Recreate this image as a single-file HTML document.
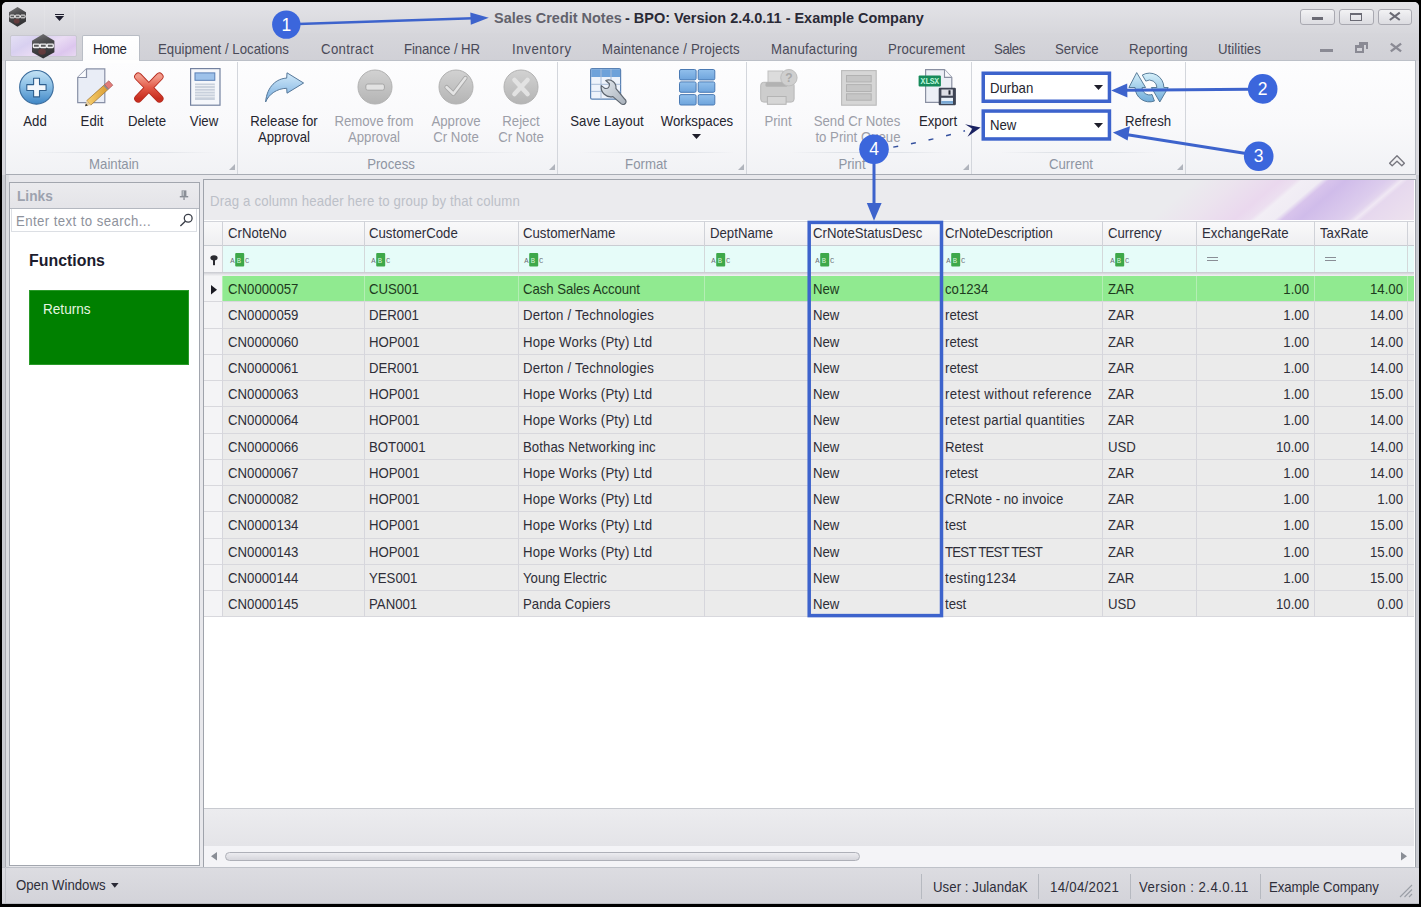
<!DOCTYPE html>
<html><head><meta charset="utf-8">
<style>
*{box-sizing:border-box;margin:0;padding:0}
html,body{width:1421px;height:907px;overflow:hidden;background:#000}
body{position:relative;font-family:"Liberation Sans",sans-serif;font-size:13.2px;color:#2b2b38}
.a{position:absolute}
svg.a{overflow:visible}
.t{position:absolute;white-space:pre;line-height:1}
</style></head><body>
<div class="a" style="left:2.00px;top:2.00px;width:1417.00px;height:902.00px;background:#d9d9de;border-radius:5px 5px 0 0"></div>
<div class="a" style="left:2.00px;top:2.00px;width:1417.00px;height:31.00px;background:linear-gradient(#e3e3e7,#d7d7dc);border-radius:5px 5px 0 0"></div>
<div class="a" style="left:2.00px;top:33.00px;width:1417.00px;height:28.00px;background:linear-gradient(#d6d6db,#d0d0d6)"></div>
<div class="a" style="left:44.00px;top:4.00px;width:1.00px;height:27.00px;background:rgba(255,255,255,0.12)"></div>
<div class="a" style="left:74.00px;top:4.00px;width:1.00px;height:27.00px;background:rgba(255,255,255,0.12)"></div>
<svg class="a" style="left:9.00px;top:7.30px" width="17" height="19.7" viewBox="0 0 17 19.7"><defs><linearGradient id="hg9" x1="0" y1="0" x2="0.3" y2="1"><stop offset="0" stop-color="#7a7a7c"/><stop offset="0.45" stop-color="#4a4a4c"/><stop offset="1" stop-color="#323234"/></linearGradient></defs><polygon points="8.5,0 17,5.319 17,14.578 8.5,19.7 0,14.578 0,5.319" fill="url(#hg9)"/><rect x="1.02" y="8.077" width="4.59" height="2.758" rx="0.8" fill="#5a5a5c" stroke="#f0f0f0" stroke-width="1"/><rect x="6.29" y="8.077" width="4.59" height="2.758" rx="0.8" fill="#5a5a5c" stroke="#f0f0f0" stroke-width="1"/><rect x="11.56" y="8.077" width="4.59" height="2.758" rx="0.8" fill="#5a5a5c" stroke="#f0f0f0" stroke-width="1"/><ellipse cx="7.65" cy="14.184" rx="2.89" ry="2.364" fill="#8c3c3c" opacity="0.5"/></svg>
<div class="a" style="left:54.80px;top:13.50px;width:9.10px;height:1.50px;background:#1e1e2e"></div>
<svg class="a" style="left:54.80px;top:15.80px" width="9.1" height="5" viewBox="0 0 9.1 5"><polygon points="0,0 9.1,0 4.55,5" fill="#1e1e2e"/></svg>
<div class="t" style="left:493.60px;top:10.42px;font-size:15.04px;color:#62626c;font-weight:bold;transform:scaleX(0.9615);transform-origin:0 0;">Sales Credit Notes</div>
<div class="t" style="left:625.38px;top:10.42px;font-size:15.04px;color:#2a2a36;font-weight:bold;transform:scaleX(0.9615);transform-origin:0 0;">- BPO: Version 2.4.0.11 - Example Company</div>
<div class="a" style="left:1300.00px;top:8.60px;width:35.00px;height:16.90px;background:linear-gradient(#f2f2f4,#dcdce1);border:1px solid #a9a9b1;border-radius:3px"></div>

<div class="a" style="left:1311.50px;top:17.30px;width:11.50px;height:2.50px;background:#6a6a74"></div>
<div class="a" style="left:1339.00px;top:8.60px;width:35.00px;height:16.90px;background:linear-gradient(#f2f2f4,#dcdce1);border:1px solid #a9a9b1;border-radius:3px"></div>

<div class="a" style="left:1349.60px;top:13.20px;width:12.70px;height:7.60px;border:1.8px solid #6a6a74;border-top-width:2.6px"></div>
<div class="a" style="left:1377.50px;top:8.60px;width:34.80px;height:16.90px;background:linear-gradient(#f2f2f4,#dcdce1);border:1px solid #a9a9b1;border-radius:3px"></div>

<svg class="a" style="left:1389.40px;top:12.20px" width="11.6" height="8.6" viewBox="0 0 11.6 8.6"><path d="M0.8,0.6 L10.8,8 M10.8,0.6 L0.8,8" stroke="#6a6a74" stroke-width="2"/></svg>
<div class="a" style="left:9.60px;top:34.70px;width:67.90px;height:22.80px;background:linear-gradient(150deg,#e4e0f4 0%,#d8d0f0 30%,#eadcf4 55%,#dcc6ee 80%,#e8d8f2 100%);border:1px solid #c8c8d0;border-radius:2px"></div>
<svg class="a" style="left:32.40px;top:34.00px" width="22.4" height="24.6" viewBox="0 0 22.4 24.6"><defs><linearGradient id="hg32" x1="0" y1="0" x2="0.3" y2="1"><stop offset="0" stop-color="#7a7a7c"/><stop offset="0.45" stop-color="#4a4a4c"/><stop offset="1" stop-color="#323234"/></linearGradient></defs><polygon points="11.2,0 22.4,6.642 22.4,18.204 11.2,24.6 0,18.204 0,6.642" fill="url(#hg32)"/><rect x="1.344" y="10.086" width="6.048" height="3.444" rx="0.8" fill="#5a5a5c" stroke="#f0f0f0" stroke-width="1.31765"/><rect x="8.288" y="10.086" width="6.048" height="3.444" rx="0.8" fill="#5a5a5c" stroke="#f0f0f0" stroke-width="1.31765"/><rect x="15.232" y="10.086" width="6.048" height="3.444" rx="0.8" fill="#5a5a5c" stroke="#f0f0f0" stroke-width="1.31765"/><ellipse cx="10.08" cy="17.712" rx="3.808" ry="2.952" fill="#8c3c3c" opacity="0.5"/></svg>
<div class="a" style="left:81.80px;top:34.60px;width:58.40px;height:27.40px;background:linear-gradient(#ffffff,#fbfbfc);border:1px solid #b9bdc5;border-bottom:none;border-radius:2px 2px 0 0"></div>
<div class="t" style="left:93.10px;top:41.84px;font-size:14.19px;color:#23232f;transform:scaleX(0.9302);transform-origin:0 0;letter-spacing:-0.513px;">Home</div>
<div class="t" style="left:158.10px;top:41.84px;font-size:14.19px;color:#4a4a58;transform:scaleX(0.9302);transform-origin:0 0;letter-spacing:0.020px;">Equipment / Locations</div>
<div class="t" style="left:320.70px;top:41.84px;font-size:14.19px;color:#4a4a58;transform:scaleX(0.9302);transform-origin:0 0;letter-spacing:0.378px;">Contract</div>
<div class="t" style="left:403.90px;top:41.84px;font-size:14.19px;color:#4a4a58;transform:scaleX(0.9302);transform-origin:0 0;letter-spacing:-0.092px;">Finance / HR</div>
<div class="t" style="left:511.70px;top:41.84px;font-size:14.19px;color:#4a4a58;transform:scaleX(0.9302);transform-origin:0 0;letter-spacing:0.646px;">Inventory</div>
<div class="t" style="left:602.40px;top:41.84px;font-size:14.19px;color:#4a4a58;transform:scaleX(0.9302);transform-origin:0 0;letter-spacing:0.178px;">Maintenance / Projects</div>
<div class="t" style="left:771.30px;top:41.84px;font-size:14.19px;color:#4a4a58;transform:scaleX(0.9302);transform-origin:0 0;letter-spacing:0.253px;">Manufacturing</div>
<div class="t" style="left:887.50px;top:41.84px;font-size:14.19px;color:#4a4a58;transform:scaleX(0.9302);transform-origin:0 0;letter-spacing:0.151px;">Procurement</div>
<div class="t" style="left:994.20px;top:41.84px;font-size:14.19px;color:#4a4a58;transform:scaleX(0.9302);transform-origin:0 0;letter-spacing:-0.434px;">Sales</div>
<div class="t" style="left:1055.00px;top:41.84px;font-size:14.19px;color:#4a4a58;transform:scaleX(0.9302);transform-origin:0 0;letter-spacing:-0.064px;">Service</div>
<div class="t" style="left:1128.90px;top:41.84px;font-size:14.19px;color:#4a4a58;transform:scaleX(0.9302);transform-origin:0 0;letter-spacing:0.176px;">Reporting</div>
<div class="t" style="left:1217.50px;top:41.84px;font-size:14.19px;color:#4a4a58;transform:scaleX(0.9302);transform-origin:0 0;letter-spacing:0.043px;">Utilities</div>
<div class="a" style="left:1320.20px;top:48.60px;width:12.50px;height:3.20px;background:#8a8a94"></div>
<div class="a" style="left:1354.80px;top:44.60px;width:9.70px;height:8.40px;border:2px solid #8a8a94;border-top-width:3px"></div>
<div class="a" style="left:1358.60px;top:41.60px;width:9.80px;height:7.40px;border:2px solid #8a8a94;border-top-width:3px;border-left:none;border-bottom:none"></div>
<svg class="a" style="left:1390.30px;top:42.80px" width="11.9" height="9" viewBox="0 0 11.9 9"><path d="M0.8,0.6 L11.1,8.4 M11.1,0.6 L0.8,8.4" stroke="#8a8a94" stroke-width="2.4"/></svg>
<div class="a" style="left:5.00px;top:60.20px;width:1411.00px;height:114.80px;background:linear-gradient(#fdfdfe 0%,#f9f9fb 55%,#f1f2f5 100%);border:1px solid #b4b8c0;border-top-color:#bcc0c8;border-bottom-color:#a8acb4"></div>
<div class="a" style="left:82.80px;top:60.00px;width:56.40px;height:3.00px;background:#fefefe"></div>
<div class="a" style="left:236.50px;top:62.00px;width:1.00px;height:112.00px;background:#d3d6dc"></div>
<div class="a" style="left:557.00px;top:62.00px;width:1.00px;height:112.00px;background:#d3d6dc"></div>
<div class="a" style="left:746.00px;top:62.00px;width:1.00px;height:112.00px;background:#d3d6dc"></div>
<div class="a" style="left:971.00px;top:62.00px;width:1.00px;height:112.00px;background:#d3d6dc"></div>
<div class="a" style="left:1185.00px;top:62.00px;width:1.00px;height:112.00px;background:#d3d6dc"></div>
<div class="a" style="left:30.00px;top:152.00px;width:185.00px;height:1.00px;background:linear-gradient(90deg,rgba(225,227,232,0),#e0e3e8 30%,#e0e3e8 70%,rgba(225,227,232,0))"></div>
<div class="a" style="left:265.00px;top:152.00px;width:265.00px;height:1.00px;background:linear-gradient(90deg,rgba(225,227,232,0),#e0e3e8 30%,#e0e3e8 70%,rgba(225,227,232,0))"></div>
<div class="a" style="left:580.00px;top:152.00px;width:155.00px;height:1.00px;background:linear-gradient(90deg,rgba(225,227,232,0),#e0e3e8 30%,#e0e3e8 70%,rgba(225,227,232,0))"></div>
<div class="a" style="left:790.00px;top:152.00px;width:160.00px;height:1.00px;background:linear-gradient(90deg,rgba(225,227,232,0),#e0e3e8 30%,#e0e3e8 70%,rgba(225,227,232,0))"></div>
<div class="a" style="left:1000.00px;top:152.00px;width:160.00px;height:1.00px;background:linear-gradient(90deg,rgba(225,227,232,0),#e0e3e8 30%,#e0e3e8 70%,rgba(225,227,232,0))"></div>
<svg class="a" style="left:228.50px;top:163.50px" width="6" height="6" viewBox="0 0 6 6"><polygon points="6,0 6,6 0,6" fill="#b0b4bc"/></svg>
<svg class="a" style="left:548.50px;top:163.50px" width="6" height="6" viewBox="0 0 6 6"><polygon points="6,0 6,6 0,6" fill="#b0b4bc"/></svg>
<svg class="a" style="left:737.50px;top:163.50px" width="6" height="6" viewBox="0 0 6 6"><polygon points="6,0 6,6 0,6" fill="#b0b4bc"/></svg>
<svg class="a" style="left:963.00px;top:163.50px" width="6" height="6" viewBox="0 0 6 6"><polygon points="6,0 6,6 0,6" fill="#b0b4bc"/></svg>
<svg class="a" style="left:1177.00px;top:163.50px" width="6" height="6" viewBox="0 0 6 6"><polygon points="6,0 6,6 0,6" fill="#b0b4bc"/></svg>
<div class="t" style="left:-35.80px;top:156.54px;width:300px;text-align:center;font-size:14.19px;color:#8e95a2;transform:scaleX(0.9302);transform-origin:50% 0;">Maintain</div>
<div class="t" style="left:241.10px;top:156.54px;width:300px;text-align:center;font-size:14.19px;color:#8e95a2;transform:scaleX(0.9302);transform-origin:50% 0;">Process</div>
<div class="t" style="left:495.60px;top:156.54px;width:300px;text-align:center;font-size:14.19px;color:#8e95a2;transform:scaleX(0.9302);transform-origin:50% 0;">Format</div>
<div class="t" style="left:701.90px;top:156.54px;width:300px;text-align:center;font-size:14.19px;color:#8e95a2;transform:scaleX(0.9302);transform-origin:50% 0;">Print</div>
<div class="t" style="left:921.20px;top:156.54px;width:300px;text-align:center;font-size:14.19px;color:#8e95a2;transform:scaleX(0.9302);transform-origin:50% 0;">Current</div>
<div class="t" style="left:-115.00px;top:114.44px;width:300px;text-align:center;font-size:14.19px;color:#25252f;transform:scaleX(0.9302);transform-origin:50% 0;">Add</div>
<div class="t" style="left:-58.40px;top:114.44px;width:300px;text-align:center;font-size:14.19px;color:#25252f;transform:scaleX(0.9302);transform-origin:50% 0;">Edit</div>
<div class="t" style="left:-2.60px;top:114.44px;width:300px;text-align:center;font-size:14.19px;color:#25252f;transform:scaleX(0.9302);transform-origin:50% 0;">Delete</div>
<div class="t" style="left:54.40px;top:114.44px;width:300px;text-align:center;font-size:14.19px;color:#25252f;transform:scaleX(0.9302);transform-origin:50% 0;">View</div>
<div class="t" style="left:133.80px;top:114.44px;width:300px;text-align:center;font-size:14.19px;color:#25252f;transform:scaleX(0.9302);transform-origin:50% 0;">Release for</div>
<div class="t" style="left:224.20px;top:114.44px;width:300px;text-align:center;font-size:14.19px;color:#9c9ea8;transform:scaleX(0.9302);transform-origin:50% 0;">Remove from</div>
<div class="t" style="left:306.20px;top:114.44px;width:300px;text-align:center;font-size:14.19px;color:#9c9ea8;transform:scaleX(0.9302);transform-origin:50% 0;">Approve</div>
<div class="t" style="left:370.90px;top:114.44px;width:300px;text-align:center;font-size:14.19px;color:#9c9ea8;transform:scaleX(0.9302);transform-origin:50% 0;">Reject</div>
<div class="t" style="left:456.90px;top:114.44px;width:300px;text-align:center;font-size:14.19px;color:#25252f;transform:scaleX(0.9302);transform-origin:50% 0;">Save Layout</div>
<div class="t" style="left:546.90px;top:114.44px;width:300px;text-align:center;font-size:14.19px;color:#25252f;transform:scaleX(0.9302);transform-origin:50% 0;">Workspaces</div>
<div class="t" style="left:628.40px;top:114.44px;width:300px;text-align:center;font-size:14.19px;color:#9c9ea8;transform:scaleX(0.9302);transform-origin:50% 0;">Print</div>
<div class="t" style="left:707.20px;top:114.44px;width:300px;text-align:center;font-size:14.19px;color:#9c9ea8;transform:scaleX(0.9302);transform-origin:50% 0;">Send Cr Notes</div>
<div class="t" style="left:788.20px;top:114.44px;width:300px;text-align:center;font-size:14.19px;color:#25252f;transform:scaleX(0.9302);transform-origin:50% 0;">Export</div>
<div class="t" style="left:997.90px;top:114.44px;width:300px;text-align:center;font-size:14.19px;color:#25252f;transform:scaleX(0.9302);transform-origin:50% 0;">Refresh</div>
<div class="t" style="left:134.00px;top:130.14px;width:300px;text-align:center;font-size:14.19px;color:#25252f;transform:scaleX(0.9302);transform-origin:50% 0;">Approval</div>
<div class="t" style="left:223.80px;top:130.14px;width:300px;text-align:center;font-size:14.19px;color:#9c9ea8;transform:scaleX(0.9302);transform-origin:50% 0;">Approval</div>
<div class="t" style="left:306.10px;top:130.14px;width:300px;text-align:center;font-size:14.19px;color:#9c9ea8;transform:scaleX(0.9302);transform-origin:50% 0;">Cr Note</div>
<div class="t" style="left:370.90px;top:130.14px;width:300px;text-align:center;font-size:14.19px;color:#9c9ea8;transform:scaleX(0.9302);transform-origin:50% 0;">Cr Note</div>
<div class="t" style="left:708.20px;top:130.14px;width:300px;text-align:center;font-size:14.19px;color:#9c9ea8;transform:scaleX(0.9302);transform-origin:50% 0;">to Print Queue</div>
<svg class="a" style="left:692.00px;top:134.00px" width="9" height="5" viewBox="0 0 9 5"><polygon points="0,0 9,0 4.5,5" fill="#1e1e2a"/></svg>
<svg class="a" style="left:18.90px;top:70.00px" width="35" height="35" viewBox="0 0 35 35"><defs><linearGradient id="gadd" x1="0" y1="0" x2="0" y2="1"><stop offset="0" stop-color="#c4e2f4"/><stop offset="0.45" stop-color="#8cc0e6"/><stop offset="1" stop-color="#3f86c6"/></linearGradient></defs>
<circle cx="17.45" cy="17.35" r="16.8" fill="url(#gadd)" stroke="#3d6e9e" stroke-width="1.1"/>
<path d="M14.6,8.2 h5.9 v6.4 h6.6 v5.9 h-6.6 v6.4 h-5.9 v-6.4 h-6.8 v-5.9 h6.8 z" fill="#f4f8fc" stroke="#2e5f8e" stroke-width="1.1" stroke-linejoin="round"/></svg>
<svg class="a" style="left:77.00px;top:68.00px" width="36" height="40" viewBox="0 0 36 40"><defs><linearGradient id="gpen" x1="0" y1="0" x2="1" y2="0"><stop offset="0" stop-color="#f8d070"/><stop offset="1" stop-color="#d89a30"/></linearGradient></defs>
<path d="M9.5,0.9 H27.8 V34.7 H0.7 V9.5 Z" fill="#e9edf6" stroke="#8890a6" stroke-width="1.2"/>
<path d="M0.7,9.5 H9.5 V0.9" fill="#fafbfd" stroke="#8890a6" stroke-width="1.2"/>
<path d="M9.8,32.6 L27.6,16.6 L31.6,21.0 L13.8,37.1 Z" fill="url(#gpen)" stroke="#9a7030" stroke-width="0.7"/><path d="M27.6,16.6 L31.8,12.8 L35.8,17.2 L31.6,21.0 Z" fill="#e27c7a" stroke="#a85a58" stroke-width="0.7"/><path d="M27,17.2 L31,21.5" stroke="#8a8a92" stroke-width="1.6"/><path d="M8.1,38.2 L9.8,32.6 L13.8,37.1 Z" fill="#e8cfa0"/><path d="M8.1,38.2 L8.9,35.6 L10.9,37.4 Z" fill="#2a2a2a"/></svg>
<svg class="a" style="left:133.00px;top:72.00px" width="32" height="31" viewBox="0 0 32 31"><defs><linearGradient id="gdel" x1="0" y1="0" x2="0" y2="1"><stop offset="0" stop-color="#f29a8a"/><stop offset="0.5" stop-color="#e25a48"/><stop offset="1" stop-color="#c82e20"/></linearGradient></defs>
<path d="M5.3,4.7 L26.4,26.5 M26.4,4.7 L5.3,26.5" stroke="#b52a1e" stroke-width="8.2" stroke-linecap="round"/>
<path d="M5.3,4.7 L26.4,26.5 M26.4,4.7 L5.3,26.5" stroke="url(#gdel)" stroke-width="6.4" stroke-linecap="round"/></svg>
<svg class="a" style="left:190.00px;top:67.50px" width="31" height="38" viewBox="0 0 31 38"><rect x="0.6" y="0.6" width="29.4" height="36.6" fill="#f5f7fb" stroke="#7482a0" stroke-width="1.2"/>
<rect x="5" y="4.9" width="19.8" height="7.4" fill="#9ec2ea" stroke="#5a80b6" stroke-width="1"/>
<rect x="5" y="15.5" width="19.8" height="16.5" fill="#c8d0dc"/>
<path d="M5,17.6 H24.8 M5,20.4 H24.8 M5,23.2 H24.8 M5,26 H24.8 M5,28.8 H24.8" stroke="#f0f2f6" stroke-width="1"/></svg>
<svg class="a" style="left:264.00px;top:72.00px" width="41" height="32" viewBox="0 0 41 32"><defs><linearGradient id="garr" x1="0" y1="0" x2="0" y2="1"><stop offset="0" stop-color="#d2eafa"/><stop offset="1" stop-color="#76acde"/></linearGradient></defs>
<path d="M1.6,30 C3,14 13,6.5 22.7,6.1 L23,0.8 L39.6,11 L23,21.2 L22.7,16.3 C13,16.5 5,22 1.6,30 Z" fill="url(#garr)" stroke="#56789a" stroke-width="1"/></svg>
<svg class="a" style="left:356.70px;top:69.30px" width="36" height="36" viewBox="0 0 36 36"><defs><linearGradient id="gg374" x1="0" y1="0" x2="0" y2="1"><stop offset="0" stop-color="#d2d2d2"/><stop offset="1" stop-color="#b4b4b4"/></linearGradient></defs>
<circle cx="18" cy="18" r="17" fill="url(#gg374)" stroke="#b2b2b2" stroke-width="1"/><rect x="8.8" y="15" width="18.6" height="6.2" rx="2" fill="#e2e2e2" stroke="#a6a6a6" stroke-width="1"/></svg>
<svg class="a" style="left:438.30px;top:69.30px" width="36" height="36" viewBox="0 0 36 36"><defs><linearGradient id="gg456" x1="0" y1="0" x2="0" y2="1"><stop offset="0" stop-color="#d2d2d2"/><stop offset="1" stop-color="#b4b4b4"/></linearGradient></defs>
<circle cx="18" cy="18" r="17" fill="url(#gg456)" stroke="#b2b2b2" stroke-width="1"/><path d="M8.6,18.2 L15.4,24.8 L27.4,9" stroke="#a8a8a8" stroke-width="4.4" fill="none" stroke-linecap="round" stroke-linejoin="round"/><path d="M8.6,18.2 L15.4,24.8 L27.4,9" stroke="#e4e4e4" stroke-width="2.6" fill="none" stroke-linecap="round" stroke-linejoin="round"/></svg>
<svg class="a" style="left:503.35px;top:69.30px" width="36" height="36" viewBox="0 0 36 36"><defs><linearGradient id="gg521" x1="0" y1="0" x2="0" y2="1"><stop offset="0" stop-color="#d2d2d2"/><stop offset="1" stop-color="#b4b4b4"/></linearGradient></defs>
<circle cx="18" cy="18" r="17" fill="url(#gg521)" stroke="#b2b2b2" stroke-width="1"/><path d="M11.5,11 L24.5,25 M24.5,11 L11.5,25" stroke="#e2e2e2" stroke-width="4.6" stroke-linecap="round"/></svg>
<svg class="a" style="left:589.50px;top:68.30px" width="36" height="37" viewBox="0 0 36 37"><rect x="0.6" y="0.6" width="30" height="30.6" rx="1.5" fill="#eef3fb" stroke="#5a82b4" stroke-width="1.2"/>
<rect x="1.2" y="1.2" width="28.8" height="7.8" fill="#6ea2da"/>
<path d="M11,1 V31 M21,1 V31 M1,16.3 H30.4 M1,23.4 H30.4" stroke="#a8bcd8" stroke-width="1"/>
<defs><linearGradient id="gwr" x1="0" y1="0" x2="1" y2="1"><stop offset="0" stop-color="#e2e8ee"/><stop offset="1" stop-color="#a8b0ba"/></linearGradient></defs><path d="M15.8,12.5 C21,10.5 26.5,14.5 26,20.6 L34.9,31.3 A2.7,2.7 0 0 1 31.3,35.9 L22.9,28.6 C16.5,30 10.2,24.5 11.3,17.6 L14.8,20.4 Q19.8,21.2 19.4,15.8 Z" fill="url(#gwr)" stroke="#5e6670" stroke-width="1.2" stroke-linejoin="round"/></svg>
<svg class="a" style="left:678.50px;top:68.50px" width="37" height="37" viewBox="0 0 37 37"><defs><linearGradient id="gws" x1="0" y1="0" x2="0" y2="1"><stop offset="0" stop-color="#92c0ec"/><stop offset="1" stop-color="#6ea4dc"/></linearGradient></defs><rect x="0.5" y="0.5" width="16.6" height="10.4" rx="1.5" fill="url(#gws)" stroke="#4a7ab4" stroke-width="1"/><rect x="0.5" y="12.9" width="16.6" height="10.4" rx="1.5" fill="url(#gws)" stroke="#4a7ab4" stroke-width="1"/><rect x="0.5" y="25.6" width="16.6" height="10.4" rx="1.5" fill="url(#gws)" stroke="#4a7ab4" stroke-width="1"/><rect x="19.2" y="0.5" width="16.6" height="10.4" rx="1.5" fill="url(#gws)" stroke="#4a7ab4" stroke-width="1"/><rect x="19.2" y="12.9" width="16.6" height="10.4" rx="1.5" fill="url(#gws)" stroke="#4a7ab4" stroke-width="1"/><rect x="19.2" y="25.6" width="16.6" height="10.4" rx="1.5" fill="url(#gws)" stroke="#4a7ab4" stroke-width="1"/></svg>
<svg class="a" style="left:759.50px;top:69.00px" width="40" height="37" viewBox="0 0 40 37"><rect x="8" y="2" width="15" height="12" fill="#dcdcdc" stroke="#c0c0c0" stroke-width="1"/>
<rect x="0.7" y="13.3" width="33.4" height="19.8" rx="3" fill="#cdcdcd" stroke="#b8b8b8" stroke-width="1"/>
<rect x="5.5" y="13.3" width="22" height="4.5" rx="1.5" fill="#b2b2b2"/>
<rect x="7.4" y="27.5" width="18.7" height="7.8" fill="#d6d6d6" stroke="#b4b4b4" stroke-width="1"/>
<circle cx="28.9" cy="8.7" r="8.2" fill="#cfcfcf" stroke="#bdbdbd" stroke-width="1"/>
<text x="28.9" y="13.3" font-size="12" font-weight="bold" text-anchor="middle" fill="#a9a9a9" font-family="Liberation Sans">?</text></svg>
<svg class="a" style="left:840.50px;top:69.50px" width="36" height="36" viewBox="0 0 36 36"><rect x="0.6" y="0.6" width="34.6" height="34.6" fill="#d6d6d6" stroke="#bababa" stroke-width="1.1"/>
<rect x="5.5" y="5.5" width="24.7" height="6.4" fill="#c6c6c6" stroke="#b2b2b2" stroke-width="1"/>
<rect x="5.5" y="14.6" width="24.7" height="6.9" fill="#c6c6c6" stroke="#b2b2b2" stroke-width="1"/>
<rect x="5.5" y="23.8" width="24.7" height="6.4" fill="#c6c6c6" stroke="#b2b2b2" stroke-width="1"/></svg>
<svg class="a" style="left:918.00px;top:68.50px" width="39" height="37" viewBox="0 0 39 37"><path d="M7.6,0.6 H26.5 L33.8,8.4 V33.4 H7.6 Z" fill="#eceff6" stroke="#8a90a2" stroke-width="1.2"/>
<path d="M26.5,0.6 V8.4 H33.8" fill="#f8f9fc" stroke="#8a90a2" stroke-width="1.1"/>
<rect x="0.6" y="6.4" width="22.3" height="11.1" rx="1" fill="#168a5a"/>
<text x="11.75" y="15.2" font-size="8.2" font-weight="bold" text-anchor="middle" fill="#b8f4d8" font-family="Liberation Mono" letter-spacing="-0.3">XLSX</text>
<rect x="20.7" y="18.8" width="17.2" height="17.5" rx="1.2" fill="#3e4454"/>
<rect x="23.4" y="20.5" width="11.4" height="6.2" fill="#dcdee6"/>
<rect x="30.5" y="21.3" width="2" height="4.3" fill="#202430"/>
<rect x="23.2" y="28.8" width="11.8" height="6" fill="#e8f0f8"/>
<rect x="23.2" y="32" width="11.8" height="2.8" fill="#7aa8d4"/></svg>
<svg class="a" style="left:0.00px;top:0.00px" width="1421" height="907" viewBox="0 0 1421 907"><defs><linearGradient id="gref" x1="0" y1="0" x2="0" y2="1"><stop offset="0" stop-color="#d6f0fa"/><stop offset="1" stop-color="#70acda"/></linearGradient></defs>
<path d="M1142.30,75.03 A14.4,14.4 0 0 1 1163.90,87.50 L1168.2,87.5 L1159.8,102 L1151.4,87.5 L1156.90,87.5 A7.4,7.4 0 0 0 1145.80,81.09 Z" fill="url(#gref)" stroke="#4c7090" stroke-width="0.9" stroke-linejoin="round"/>
<path d="M1154.43,101.03 A14.4,14.4 0 0 1 1135.10,87.50 L1128.9,87.5 L1136.7,72.6 L1145.6,87.5 L1142.10,87.5 A7.4,7.4 0 0 0 1152.03,94.45 Z" fill="url(#gref)" stroke="#4c7090" stroke-width="0.9" stroke-linejoin="round"/></svg>
<div class="a" style="left:983.00px;top:73.00px;width:126.70px;height:28.50px;background:#fff"></div>
<div class="a" style="left:983.00px;top:110.80px;width:126.70px;height:28.40px;background:#fff"></div>
<div class="t" style="left:989.60px;top:80.54px;font-size:14.19px;color:#25252f;transform:scaleX(0.9302);transform-origin:0 0;">Durban</div>
<div class="t" style="left:989.60px;top:117.74px;font-size:14.19px;color:#25252f;transform:scaleX(0.9302);transform-origin:0 0;">New</div>
<svg class="a" style="left:1093.50px;top:85.00px" width="9" height="5" viewBox="0 0 9 5"><polygon points="0,0 9,0 4.5,5" fill="#1e1e2a"/></svg>
<svg class="a" style="left:1093.50px;top:122.50px" width="9" height="5" viewBox="0 0 9 5"><polygon points="0,0 9,0 4.5,5" fill="#1e1e2a"/></svg>
<svg class="a" style="left:0.00px;top:0.00px" width="1421" height="907" viewBox="0 0 1421 907"><polygon points="1397,155.8 1404.4,163.2 1401.8,165.8 1397,161.2 1392.2,165.8 1389.6,163.2" fill="#f2f2f4" stroke="#76767e" stroke-width="1.3" stroke-linejoin="round"/></svg>
<div class="a" style="left:2.00px;top:175.00px;width:1417.00px;height:692.00px;background:#e8e8ec"></div>
<div class="a" style="left:2.00px;top:175.00px;width:3.00px;height:692.00px;background:#c9cbd1"></div>
<div class="a" style="left:5.00px;top:175.00px;width:1.00px;height:692.00px;background:#abadb4"></div>
<div class="a" style="left:6.00px;top:175.00px;width:2.50px;height:692.00px;background:#dcdee2"></div>
<div class="a" style="left:1415.50px;top:175.00px;width:3.50px;height:692.00px;background:#c9cbd1"></div>
<div class="a" style="left:8.50px;top:181.50px;width:191.50px;height:684.00px;background:#fff;border:1px solid #a2a6ae"></div>
<div class="a" style="left:9.50px;top:182.50px;width:189.50px;height:26.10px;background:linear-gradient(#ebebee,#e4e4e8);border-bottom:1.2px solid #b4b8c0"></div>
<div class="t" style="left:16.50px;top:188.79px;font-size:14.25px;color:#9da2ae;font-weight:bold;transform:scaleX(0.9615);transform-origin:0 0;">Links</div>
<svg class="a" style="left:178.50px;top:189.50px" width="10" height="11" viewBox="0 0 10 11"><rect x="2.6" y="0.4" width="4.8" height="6" fill="#8a8e96"/><rect x="3.6" y="0.8" width="1.2" height="5" fill="#c8ccd2"/><rect x="0.8" y="6" width="8.4" height="1.4" fill="#8a8e96"/><rect x="4.4" y="7.2" width="1.3" height="2.8" fill="#8a8e96"/></svg>
<div class="a" style="left:11.00px;top:208.60px;width:185.50px;height:23.20px;background:#fff;border:1px solid #dcdfe4;border-top:none"></div>
<div class="t" style="left:15.70px;top:213.64px;font-size:14.19px;color:#8e929c;transform:scaleX(0.9302);transform-origin:0 0;letter-spacing:0.446px;">Enter text to search...</div>
<svg class="a" style="left:0.00px;top:0.00px" width="1421" height="907" viewBox="0 0 1421 907"><circle cx="188.2" cy="218.2" r="3.9" fill="none" stroke="#3a3e48" stroke-width="1.3"/><path d="M185.6,221.1 L180.4,226" stroke="#3a3e48" stroke-width="1.4"/></svg>
<div class="t" style="left:28.60px;top:252.74px;font-size:16.54px;color:#1c1c2e;font-weight:bold;transform:scaleX(0.9615);transform-origin:0 0;">Functions</div>
<div class="a" style="left:28.60px;top:290.30px;width:160.20px;height:74.80px;background:#008000;border:1px solid #2a9a2a"></div>
<div class="t" style="left:42.60px;top:301.97px;font-size:14.62px;color:#e6f6e0;transform:scaleX(0.9302);transform-origin:0 0;">Returns</div>
<div class="a" style="left:202.50px;top:179.00px;width:1213.00px;height:689.00px;background:#fff;border:1.6px solid #9fa3ab"></div>
<div class="a" style="left:204.00px;top:180.40px;width:1210.00px;height:40.10px;background:#ebebee"></div>
<div class="a" style="left:1150.00px;top:180.40px;width:264.00px;height:40.10px;background:linear-gradient(139.7deg,rgba(235,235,238,0) 0%,rgba(235,235,238,0) 15%,rgba(236,222,238,0.6) 28%,#ead8ee 42%,#ecdff0 47%,#f2eef5 49%,#f0ecf4 55%,#d8c4ec 57.5%,#d0bcea 63%,#dccced 76%,#e2d4ee 79%,#f0e8f4 81%,#e6d8ee 83%,#ede2ee 100%)"></div>
<div class="t" style="left:209.90px;top:194.44px;font-size:14.19px;color:#bcc0c8;transform:scaleX(0.9302);transform-origin:0 0;letter-spacing:0.169px;">Drag a column header here to group by that column</div>
<div class="a" style="left:204.00px;top:220.50px;width:1210.00px;height:25.30px;background:linear-gradient(#f9f9fa,#efeff1);border-top:1px solid #d2d4da;border-bottom:1px solid #cacdd3"></div>
<div class="a" style="left:204.00px;top:245.80px;width:1210.00px;height:26.50px;background:#e6fcf9"></div>
<div class="a" style="left:204.00px;top:245.80px;width:18.80px;height:26.50px;background:#f5f5f7"></div>
<div class="a" style="left:204.00px;top:272.30px;width:1210.00px;height:3.40px;background:linear-gradient(#c6c8ce,#e4e4e8 60%,#f2f2f4)"></div>
<div class="a" style="left:222.80px;top:276.00px;width:1191.20px;height:341.00px;background:#ebebeb"></div>
<div class="a" style="left:204.00px;top:276.00px;width:18.80px;height:341.00px;background:#f4f4f6"></div>
<div class="a" style="left:222.80px;top:276.00px;width:1191.20px;height:25.00px;background:#90ea90"></div>
<div class="a" style="left:204.00px;top:301.00px;width:1210.00px;height:1.00px;background:#d8d8dd"></div>
<div class="a" style="left:204.00px;top:328.00px;width:1210.00px;height:1.00px;background:#d8d8dd"></div>
<div class="a" style="left:204.00px;top:354.00px;width:1210.00px;height:1.00px;background:#d8d8dd"></div>
<div class="a" style="left:204.00px;top:380.00px;width:1210.00px;height:1.00px;background:#d8d8dd"></div>
<div class="a" style="left:204.00px;top:406.00px;width:1210.00px;height:1.00px;background:#d8d8dd"></div>
<div class="a" style="left:204.00px;top:433.00px;width:1210.00px;height:1.00px;background:#d8d8dd"></div>
<div class="a" style="left:204.00px;top:459.00px;width:1210.00px;height:1.00px;background:#d8d8dd"></div>
<div class="a" style="left:204.00px;top:485.00px;width:1210.00px;height:1.00px;background:#d8d8dd"></div>
<div class="a" style="left:204.00px;top:511.00px;width:1210.00px;height:1.00px;background:#d8d8dd"></div>
<div class="a" style="left:204.00px;top:538.00px;width:1210.00px;height:1.00px;background:#d8d8dd"></div>
<div class="a" style="left:204.00px;top:564.00px;width:1210.00px;height:1.00px;background:#d8d8dd"></div>
<div class="a" style="left:204.00px;top:590.00px;width:1210.00px;height:1.00px;background:#d8d8dd"></div>
<div class="a" style="left:204.00px;top:616.00px;width:1210.00px;height:1.00px;background:#d8d8dd"></div>
<div class="a" style="left:222.00px;top:221.00px;width:1.00px;height:25.00px;background:#d0d2d8"></div>
<div class="a" style="left:222.00px;top:246.00px;width:1.00px;height:26.00px;background:#d4d8da"></div>
<div class="a" style="left:222.00px;top:302.00px;width:1.00px;height:315.00px;background:#d6d6dc"></div>
<div class="a" style="left:222.00px;top:276.00px;width:1.00px;height:25.00px;background:#b4eeb4"></div>
<div class="a" style="left:364.00px;top:221.00px;width:1.00px;height:25.00px;background:#d0d2d8"></div>
<div class="a" style="left:364.00px;top:246.00px;width:1.00px;height:26.00px;background:#d4d8da"></div>
<div class="a" style="left:364.00px;top:302.00px;width:1.00px;height:315.00px;background:#d6d6dc"></div>
<div class="a" style="left:364.00px;top:276.00px;width:1.00px;height:25.00px;background:#b4eeb4"></div>
<div class="a" style="left:518.00px;top:221.00px;width:1.00px;height:25.00px;background:#d0d2d8"></div>
<div class="a" style="left:518.00px;top:246.00px;width:1.00px;height:26.00px;background:#d4d8da"></div>
<div class="a" style="left:518.00px;top:302.00px;width:1.00px;height:315.00px;background:#d6d6dc"></div>
<div class="a" style="left:518.00px;top:276.00px;width:1.00px;height:25.00px;background:#b4eeb4"></div>
<div class="a" style="left:704.00px;top:221.00px;width:1.00px;height:25.00px;background:#d0d2d8"></div>
<div class="a" style="left:704.00px;top:246.00px;width:1.00px;height:26.00px;background:#d4d8da"></div>
<div class="a" style="left:704.00px;top:302.00px;width:1.00px;height:315.00px;background:#d6d6dc"></div>
<div class="a" style="left:704.00px;top:276.00px;width:1.00px;height:25.00px;background:#b4eeb4"></div>
<div class="a" style="left:808.00px;top:221.00px;width:1.00px;height:25.00px;background:#d0d2d8"></div>
<div class="a" style="left:808.00px;top:246.00px;width:1.00px;height:26.00px;background:#d4d8da"></div>
<div class="a" style="left:808.00px;top:302.00px;width:1.00px;height:315.00px;background:#d6d6dc"></div>
<div class="a" style="left:808.00px;top:276.00px;width:1.00px;height:25.00px;background:#b4eeb4"></div>
<div class="a" style="left:942.00px;top:221.00px;width:1.00px;height:25.00px;background:#d0d2d8"></div>
<div class="a" style="left:942.00px;top:246.00px;width:1.00px;height:26.00px;background:#d4d8da"></div>
<div class="a" style="left:942.00px;top:302.00px;width:1.00px;height:315.00px;background:#d6d6dc"></div>
<div class="a" style="left:942.00px;top:276.00px;width:1.00px;height:25.00px;background:#b4eeb4"></div>
<div class="a" style="left:1102.00px;top:221.00px;width:1.00px;height:25.00px;background:#d0d2d8"></div>
<div class="a" style="left:1102.00px;top:246.00px;width:1.00px;height:26.00px;background:#d4d8da"></div>
<div class="a" style="left:1102.00px;top:302.00px;width:1.00px;height:315.00px;background:#d6d6dc"></div>
<div class="a" style="left:1102.00px;top:276.00px;width:1.00px;height:25.00px;background:#b4eeb4"></div>
<div class="a" style="left:1196.00px;top:221.00px;width:1.00px;height:25.00px;background:#d0d2d8"></div>
<div class="a" style="left:1196.00px;top:246.00px;width:1.00px;height:26.00px;background:#d4d8da"></div>
<div class="a" style="left:1196.00px;top:302.00px;width:1.00px;height:315.00px;background:#d6d6dc"></div>
<div class="a" style="left:1196.00px;top:276.00px;width:1.00px;height:25.00px;background:#b4eeb4"></div>
<div class="a" style="left:1314.00px;top:221.00px;width:1.00px;height:25.00px;background:#d0d2d8"></div>
<div class="a" style="left:1314.00px;top:246.00px;width:1.00px;height:26.00px;background:#d4d8da"></div>
<div class="a" style="left:1314.00px;top:302.00px;width:1.00px;height:315.00px;background:#d6d6dc"></div>
<div class="a" style="left:1314.00px;top:276.00px;width:1.00px;height:25.00px;background:#b4eeb4"></div>
<div class="a" style="left:1407.00px;top:221.00px;width:1.00px;height:25.00px;background:#d0d2d8"></div>
<div class="a" style="left:1407.00px;top:246.00px;width:1.00px;height:26.00px;background:#d4d8da"></div>
<div class="a" style="left:1407.00px;top:302.00px;width:1.00px;height:315.00px;background:#d6d6dc"></div>
<div class="a" style="left:1407.00px;top:276.00px;width:1.00px;height:25.00px;background:#b4eeb4"></div>
<div class="t" style="left:228.40px;top:225.94px;font-size:14.19px;color:#2e2e3a;transform:scaleX(0.9302);transform-origin:0 0;">CrNoteNo</div>
<div class="t" style="left:369.20px;top:225.94px;font-size:14.19px;color:#2e2e3a;transform:scaleX(0.9302);transform-origin:0 0;">CustomerCode</div>
<div class="t" style="left:523.00px;top:225.94px;font-size:14.19px;color:#2e2e3a;transform:scaleX(0.9302);transform-origin:0 0;">CustomerName</div>
<div class="t" style="left:709.60px;top:225.94px;font-size:14.19px;color:#2e2e3a;transform:scaleX(0.9302);transform-origin:0 0;">DeptName</div>
<div class="t" style="left:813.20px;top:225.94px;font-size:14.19px;color:#2e2e3a;transform:scaleX(0.9302);transform-origin:0 0;">CrNoteStatusDesc</div>
<div class="t" style="left:944.50px;top:225.94px;font-size:14.19px;color:#2e2e3a;transform:scaleX(0.9302);transform-origin:0 0;">CrNoteDescription</div>
<div class="t" style="left:1108.30px;top:225.94px;font-size:14.19px;color:#2e2e3a;transform:scaleX(0.9302);transform-origin:0 0;">Currency</div>
<div class="t" style="left:1201.50px;top:225.94px;font-size:14.19px;color:#2e2e3a;transform:scaleX(0.9302);transform-origin:0 0;">ExchangeRate</div>
<div class="t" style="left:1319.70px;top:225.94px;font-size:14.19px;color:#2e2e3a;transform:scaleX(0.9302);transform-origin:0 0;">TaxRate</div>
<svg class="a" style="left:229.80px;top:252.70px" width="20" height="14" viewBox="0 0 20 14"><text x="0.3" y="10" font-size="7.2" font-family="Liberation Mono" fill="#6a6e76">A</text><rect x="5.2" y="0" width="9" height="13.6" rx="1" fill="#3ea84a"/><text x="6.8" y="10" font-size="7.2" font-family="Liberation Mono" fill="#d8f4d8">B</text><text x="15" y="10" font-size="7.2" font-family="Liberation Mono" fill="#6a6e76">C</text></svg>
<svg class="a" style="left:370.50px;top:252.70px" width="20" height="14" viewBox="0 0 20 14"><text x="0.3" y="10" font-size="7.2" font-family="Liberation Mono" fill="#6a6e76">A</text><rect x="5.2" y="0" width="9" height="13.6" rx="1" fill="#3ea84a"/><text x="6.8" y="10" font-size="7.2" font-family="Liberation Mono" fill="#d8f4d8">B</text><text x="15" y="10" font-size="7.2" font-family="Liberation Mono" fill="#6a6e76">C</text></svg>
<svg class="a" style="left:524.30px;top:252.70px" width="20" height="14" viewBox="0 0 20 14"><text x="0.3" y="10" font-size="7.2" font-family="Liberation Mono" fill="#6a6e76">A</text><rect x="5.2" y="0" width="9" height="13.6" rx="1" fill="#3ea84a"/><text x="6.8" y="10" font-size="7.2" font-family="Liberation Mono" fill="#d8f4d8">B</text><text x="15" y="10" font-size="7.2" font-family="Liberation Mono" fill="#6a6e76">C</text></svg>
<svg class="a" style="left:710.80px;top:252.70px" width="20" height="14" viewBox="0 0 20 14"><text x="0.3" y="10" font-size="7.2" font-family="Liberation Mono" fill="#6a6e76">A</text><rect x="5.2" y="0" width="9" height="13.6" rx="1" fill="#3ea84a"/><text x="6.8" y="10" font-size="7.2" font-family="Liberation Mono" fill="#d8f4d8">B</text><text x="15" y="10" font-size="7.2" font-family="Liberation Mono" fill="#6a6e76">C</text></svg>
<svg class="a" style="left:814.50px;top:252.70px" width="20" height="14" viewBox="0 0 20 14"><text x="0.3" y="10" font-size="7.2" font-family="Liberation Mono" fill="#6a6e76">A</text><rect x="5.2" y="0" width="9" height="13.6" rx="1" fill="#3ea84a"/><text x="6.8" y="10" font-size="7.2" font-family="Liberation Mono" fill="#d8f4d8">B</text><text x="15" y="10" font-size="7.2" font-family="Liberation Mono" fill="#6a6e76">C</text></svg>
<svg class="a" style="left:945.50px;top:252.70px" width="20" height="14" viewBox="0 0 20 14"><text x="0.3" y="10" font-size="7.2" font-family="Liberation Mono" fill="#6a6e76">A</text><rect x="5.2" y="0" width="9" height="13.6" rx="1" fill="#3ea84a"/><text x="6.8" y="10" font-size="7.2" font-family="Liberation Mono" fill="#d8f4d8">B</text><text x="15" y="10" font-size="7.2" font-family="Liberation Mono" fill="#6a6e76">C</text></svg>
<svg class="a" style="left:1109.50px;top:252.70px" width="20" height="14" viewBox="0 0 20 14"><text x="0.3" y="10" font-size="7.2" font-family="Liberation Mono" fill="#6a6e76">A</text><rect x="5.2" y="0" width="9" height="13.6" rx="1" fill="#3ea84a"/><text x="6.8" y="10" font-size="7.2" font-family="Liberation Mono" fill="#d8f4d8">B</text><text x="15" y="10" font-size="7.2" font-family="Liberation Mono" fill="#6a6e76">C</text></svg>
<div class="a" style="left:1206.50px;top:256.60px;width:11.00px;height:1.20px;background:#8a8e96"></div>
<div class="a" style="left:1206.50px;top:260.20px;width:11.00px;height:1.20px;background:#8a8e96"></div>
<div class="a" style="left:1324.50px;top:256.60px;width:11.00px;height:1.20px;background:#8a8e96"></div>
<div class="a" style="left:1324.50px;top:260.20px;width:11.00px;height:1.20px;background:#8a8e96"></div>
<svg class="a" style="left:209.50px;top:254.50px" width="8" height="11" viewBox="0 0 8 11"><ellipse cx="4" cy="2.8" rx="3.6" ry="2.6" fill="#2a2a30"/><rect x="3" y="4" width="2" height="6.2" fill="#2a2a30"/></svg>
<svg class="a" style="left:211.00px;top:284.60px" width="6" height="9.6" viewBox="0 0 6 9.6"><polygon points="0,0 6,4.8 0,9.6" fill="#1a1a22"/></svg>
<div class="t" style="left:228.40px;top:282.24px;font-size:14.19px;color:#1e3a1e;transform:scaleX(0.9302);transform-origin:0 0;">CN0000057</div>
<div class="t" style="left:369.20px;top:282.24px;font-size:14.19px;color:#1e3a1e;transform:scaleX(0.9302);transform-origin:0 0;">CUS001</div>
<div class="t" style="left:523.00px;top:282.24px;font-size:14.19px;color:#1e3a1e;transform:scaleX(0.9302);transform-origin:0 0;letter-spacing:-0.068px;">Cash Sales Account</div>
<div class="t" style="left:813.20px;top:282.24px;font-size:14.19px;color:#1e3a1e;transform:scaleX(0.9302);transform-origin:0 0;">New</div>
<div class="t" style="left:944.50px;top:282.24px;font-size:14.19px;color:#1e3a1e;transform:scaleX(0.9302);transform-origin:0 0;">co1234</div>
<div class="t" style="left:1108.30px;top:282.24px;font-size:14.19px;color:#1e3a1e;transform:scaleX(0.9302);transform-origin:0 0;">ZAR</div>
<div class="t" style="left:1108.50px;top:282.24px;width:200px;text-align:right;font-size:14.19px;color:#1e3a1e;transform:scaleX(0.9302);transform-origin:100% 0;">1.00</div>
<div class="t" style="left:1202.50px;top:282.24px;width:200px;text-align:right;font-size:14.19px;color:#1e3a1e;transform:scaleX(0.9302);transform-origin:100% 0;">14.00</div>
<div class="t" style="left:228.40px;top:308.49px;font-size:14.19px;color:#2e2e38;transform:scaleX(0.9302);transform-origin:0 0;">CN0000059</div>
<div class="t" style="left:369.20px;top:308.49px;font-size:14.19px;color:#2e2e38;transform:scaleX(0.9302);transform-origin:0 0;">DER001</div>
<div class="t" style="left:523.00px;top:308.49px;font-size:14.19px;color:#2e2e38;transform:scaleX(0.9302);transform-origin:0 0;letter-spacing:0.183px;">Derton / Technologies</div>
<div class="t" style="left:813.20px;top:308.49px;font-size:14.19px;color:#2e2e38;transform:scaleX(0.9302);transform-origin:0 0;">New</div>
<div class="t" style="left:944.50px;top:308.49px;font-size:14.19px;color:#2e2e38;transform:scaleX(0.9302);transform-origin:0 0;">retest</div>
<div class="t" style="left:1108.30px;top:308.49px;font-size:14.19px;color:#2e2e38;transform:scaleX(0.9302);transform-origin:0 0;">ZAR</div>
<div class="t" style="left:1108.50px;top:308.49px;width:200px;text-align:right;font-size:14.19px;color:#2e2e38;transform:scaleX(0.9302);transform-origin:100% 0;">1.00</div>
<div class="t" style="left:1202.50px;top:308.49px;width:200px;text-align:right;font-size:14.19px;color:#2e2e38;transform:scaleX(0.9302);transform-origin:100% 0;">14.00</div>
<div class="t" style="left:228.40px;top:334.74px;font-size:14.19px;color:#2e2e38;transform:scaleX(0.9302);transform-origin:0 0;">CN0000060</div>
<div class="t" style="left:369.20px;top:334.74px;font-size:14.19px;color:#2e2e38;transform:scaleX(0.9302);transform-origin:0 0;">HOP001</div>
<div class="t" style="left:523.00px;top:334.74px;font-size:14.19px;color:#2e2e38;transform:scaleX(0.9302);transform-origin:0 0;letter-spacing:0.176px;">Hope Works (Pty) Ltd</div>
<div class="t" style="left:813.20px;top:334.74px;font-size:14.19px;color:#2e2e38;transform:scaleX(0.9302);transform-origin:0 0;">New</div>
<div class="t" style="left:944.50px;top:334.74px;font-size:14.19px;color:#2e2e38;transform:scaleX(0.9302);transform-origin:0 0;">retest</div>
<div class="t" style="left:1108.30px;top:334.74px;font-size:14.19px;color:#2e2e38;transform:scaleX(0.9302);transform-origin:0 0;">ZAR</div>
<div class="t" style="left:1108.50px;top:334.74px;width:200px;text-align:right;font-size:14.19px;color:#2e2e38;transform:scaleX(0.9302);transform-origin:100% 0;">1.00</div>
<div class="t" style="left:1202.50px;top:334.74px;width:200px;text-align:right;font-size:14.19px;color:#2e2e38;transform:scaleX(0.9302);transform-origin:100% 0;">14.00</div>
<div class="t" style="left:228.40px;top:360.99px;font-size:14.19px;color:#2e2e38;transform:scaleX(0.9302);transform-origin:0 0;">CN0000061</div>
<div class="t" style="left:369.20px;top:360.99px;font-size:14.19px;color:#2e2e38;transform:scaleX(0.9302);transform-origin:0 0;">DER001</div>
<div class="t" style="left:523.00px;top:360.99px;font-size:14.19px;color:#2e2e38;transform:scaleX(0.9302);transform-origin:0 0;letter-spacing:0.183px;">Derton / Technologies</div>
<div class="t" style="left:813.20px;top:360.99px;font-size:14.19px;color:#2e2e38;transform:scaleX(0.9302);transform-origin:0 0;">New</div>
<div class="t" style="left:944.50px;top:360.99px;font-size:14.19px;color:#2e2e38;transform:scaleX(0.9302);transform-origin:0 0;">retest</div>
<div class="t" style="left:1108.30px;top:360.99px;font-size:14.19px;color:#2e2e38;transform:scaleX(0.9302);transform-origin:0 0;">ZAR</div>
<div class="t" style="left:1108.50px;top:360.99px;width:200px;text-align:right;font-size:14.19px;color:#2e2e38;transform:scaleX(0.9302);transform-origin:100% 0;">1.00</div>
<div class="t" style="left:1202.50px;top:360.99px;width:200px;text-align:right;font-size:14.19px;color:#2e2e38;transform:scaleX(0.9302);transform-origin:100% 0;">14.00</div>
<div class="t" style="left:228.40px;top:387.24px;font-size:14.19px;color:#2e2e38;transform:scaleX(0.9302);transform-origin:0 0;">CN0000063</div>
<div class="t" style="left:369.20px;top:387.24px;font-size:14.19px;color:#2e2e38;transform:scaleX(0.9302);transform-origin:0 0;">HOP001</div>
<div class="t" style="left:523.00px;top:387.24px;font-size:14.19px;color:#2e2e38;transform:scaleX(0.9302);transform-origin:0 0;letter-spacing:0.176px;">Hope Works (Pty) Ltd</div>
<div class="t" style="left:813.20px;top:387.24px;font-size:14.19px;color:#2e2e38;transform:scaleX(0.9302);transform-origin:0 0;">New</div>
<div class="t" style="left:944.50px;top:387.24px;font-size:14.19px;color:#2e2e38;transform:scaleX(0.9302);transform-origin:0 0;letter-spacing:0.406px;">retest without reference</div>
<div class="t" style="left:1108.30px;top:387.24px;font-size:14.19px;color:#2e2e38;transform:scaleX(0.9302);transform-origin:0 0;">ZAR</div>
<div class="t" style="left:1108.50px;top:387.24px;width:200px;text-align:right;font-size:14.19px;color:#2e2e38;transform:scaleX(0.9302);transform-origin:100% 0;">1.00</div>
<div class="t" style="left:1202.50px;top:387.24px;width:200px;text-align:right;font-size:14.19px;color:#2e2e38;transform:scaleX(0.9302);transform-origin:100% 0;">15.00</div>
<div class="t" style="left:228.40px;top:413.49px;font-size:14.19px;color:#2e2e38;transform:scaleX(0.9302);transform-origin:0 0;">CN0000064</div>
<div class="t" style="left:369.20px;top:413.49px;font-size:14.19px;color:#2e2e38;transform:scaleX(0.9302);transform-origin:0 0;">HOP001</div>
<div class="t" style="left:523.00px;top:413.49px;font-size:14.19px;color:#2e2e38;transform:scaleX(0.9302);transform-origin:0 0;letter-spacing:0.176px;">Hope Works (Pty) Ltd</div>
<div class="t" style="left:813.20px;top:413.49px;font-size:14.19px;color:#2e2e38;transform:scaleX(0.9302);transform-origin:0 0;">New</div>
<div class="t" style="left:944.50px;top:413.49px;font-size:14.19px;color:#2e2e38;transform:scaleX(0.9302);transform-origin:0 0;letter-spacing:0.310px;">retest partial quantities</div>
<div class="t" style="left:1108.30px;top:413.49px;font-size:14.19px;color:#2e2e38;transform:scaleX(0.9302);transform-origin:0 0;">ZAR</div>
<div class="t" style="left:1108.50px;top:413.49px;width:200px;text-align:right;font-size:14.19px;color:#2e2e38;transform:scaleX(0.9302);transform-origin:100% 0;">1.00</div>
<div class="t" style="left:1202.50px;top:413.49px;width:200px;text-align:right;font-size:14.19px;color:#2e2e38;transform:scaleX(0.9302);transform-origin:100% 0;">14.00</div>
<div class="t" style="left:228.40px;top:439.74px;font-size:14.19px;color:#2e2e38;transform:scaleX(0.9302);transform-origin:0 0;">CN0000066</div>
<div class="t" style="left:369.20px;top:439.74px;font-size:14.19px;color:#2e2e38;transform:scaleX(0.9302);transform-origin:0 0;">BOT0001</div>
<div class="t" style="left:523.00px;top:439.74px;font-size:14.19px;color:#2e2e38;transform:scaleX(0.9302);transform-origin:0 0;letter-spacing:0.076px;">Bothas Networking inc</div>
<div class="t" style="left:813.20px;top:439.74px;font-size:14.19px;color:#2e2e38;transform:scaleX(0.9302);transform-origin:0 0;">New</div>
<div class="t" style="left:944.50px;top:439.74px;font-size:14.19px;color:#2e2e38;transform:scaleX(0.9302);transform-origin:0 0;">Retest</div>
<div class="t" style="left:1108.30px;top:439.74px;font-size:14.19px;color:#2e2e38;transform:scaleX(0.9302);transform-origin:0 0;">USD</div>
<div class="t" style="left:1108.50px;top:439.74px;width:200px;text-align:right;font-size:14.19px;color:#2e2e38;transform:scaleX(0.9302);transform-origin:100% 0;">10.00</div>
<div class="t" style="left:1202.50px;top:439.74px;width:200px;text-align:right;font-size:14.19px;color:#2e2e38;transform:scaleX(0.9302);transform-origin:100% 0;">14.00</div>
<div class="t" style="left:228.40px;top:465.99px;font-size:14.19px;color:#2e2e38;transform:scaleX(0.9302);transform-origin:0 0;">CN0000067</div>
<div class="t" style="left:369.20px;top:465.99px;font-size:14.19px;color:#2e2e38;transform:scaleX(0.9302);transform-origin:0 0;">HOP001</div>
<div class="t" style="left:523.00px;top:465.99px;font-size:14.19px;color:#2e2e38;transform:scaleX(0.9302);transform-origin:0 0;letter-spacing:0.176px;">Hope Works (Pty) Ltd</div>
<div class="t" style="left:813.20px;top:465.99px;font-size:14.19px;color:#2e2e38;transform:scaleX(0.9302);transform-origin:0 0;">New</div>
<div class="t" style="left:944.50px;top:465.99px;font-size:14.19px;color:#2e2e38;transform:scaleX(0.9302);transform-origin:0 0;">retest</div>
<div class="t" style="left:1108.30px;top:465.99px;font-size:14.19px;color:#2e2e38;transform:scaleX(0.9302);transform-origin:0 0;">ZAR</div>
<div class="t" style="left:1108.50px;top:465.99px;width:200px;text-align:right;font-size:14.19px;color:#2e2e38;transform:scaleX(0.9302);transform-origin:100% 0;">1.00</div>
<div class="t" style="left:1202.50px;top:465.99px;width:200px;text-align:right;font-size:14.19px;color:#2e2e38;transform:scaleX(0.9302);transform-origin:100% 0;">14.00</div>
<div class="t" style="left:228.40px;top:492.24px;font-size:14.19px;color:#2e2e38;transform:scaleX(0.9302);transform-origin:0 0;">CN0000082</div>
<div class="t" style="left:369.20px;top:492.24px;font-size:14.19px;color:#2e2e38;transform:scaleX(0.9302);transform-origin:0 0;">HOP001</div>
<div class="t" style="left:523.00px;top:492.24px;font-size:14.19px;color:#2e2e38;transform:scaleX(0.9302);transform-origin:0 0;letter-spacing:0.176px;">Hope Works (Pty) Ltd</div>
<div class="t" style="left:813.20px;top:492.24px;font-size:14.19px;color:#2e2e38;transform:scaleX(0.9302);transform-origin:0 0;">New</div>
<div class="t" style="left:944.50px;top:492.24px;font-size:14.19px;color:#2e2e38;transform:scaleX(0.9302);transform-origin:0 0;letter-spacing:0.011px;">CRNote - no invoice</div>
<div class="t" style="left:1108.30px;top:492.24px;font-size:14.19px;color:#2e2e38;transform:scaleX(0.9302);transform-origin:0 0;">ZAR</div>
<div class="t" style="left:1108.50px;top:492.24px;width:200px;text-align:right;font-size:14.19px;color:#2e2e38;transform:scaleX(0.9302);transform-origin:100% 0;">1.00</div>
<div class="t" style="left:1202.50px;top:492.24px;width:200px;text-align:right;font-size:14.19px;color:#2e2e38;transform:scaleX(0.9302);transform-origin:100% 0;">1.00</div>
<div class="t" style="left:228.40px;top:518.49px;font-size:14.19px;color:#2e2e38;transform:scaleX(0.9302);transform-origin:0 0;">CN0000134</div>
<div class="t" style="left:369.20px;top:518.49px;font-size:14.19px;color:#2e2e38;transform:scaleX(0.9302);transform-origin:0 0;">HOP001</div>
<div class="t" style="left:523.00px;top:518.49px;font-size:14.19px;color:#2e2e38;transform:scaleX(0.9302);transform-origin:0 0;letter-spacing:0.176px;">Hope Works (Pty) Ltd</div>
<div class="t" style="left:813.20px;top:518.49px;font-size:14.19px;color:#2e2e38;transform:scaleX(0.9302);transform-origin:0 0;">New</div>
<div class="t" style="left:944.50px;top:518.49px;font-size:14.19px;color:#2e2e38;transform:scaleX(0.9302);transform-origin:0 0;">test</div>
<div class="t" style="left:1108.30px;top:518.49px;font-size:14.19px;color:#2e2e38;transform:scaleX(0.9302);transform-origin:0 0;">ZAR</div>
<div class="t" style="left:1108.50px;top:518.49px;width:200px;text-align:right;font-size:14.19px;color:#2e2e38;transform:scaleX(0.9302);transform-origin:100% 0;">1.00</div>
<div class="t" style="left:1202.50px;top:518.49px;width:200px;text-align:right;font-size:14.19px;color:#2e2e38;transform:scaleX(0.9302);transform-origin:100% 0;">15.00</div>
<div class="t" style="left:228.40px;top:544.74px;font-size:14.19px;color:#2e2e38;transform:scaleX(0.9302);transform-origin:0 0;">CN0000143</div>
<div class="t" style="left:369.20px;top:544.74px;font-size:14.19px;color:#2e2e38;transform:scaleX(0.9302);transform-origin:0 0;">HOP001</div>
<div class="t" style="left:523.00px;top:544.74px;font-size:14.19px;color:#2e2e38;transform:scaleX(0.9302);transform-origin:0 0;letter-spacing:0.176px;">Hope Works (Pty) Ltd</div>
<div class="t" style="left:813.20px;top:544.74px;font-size:14.19px;color:#2e2e38;transform:scaleX(0.9302);transform-origin:0 0;">New</div>
<div class="t" style="left:944.50px;top:544.74px;font-size:14.19px;color:#2e2e38;transform:scaleX(0.9302);transform-origin:0 0;letter-spacing:-0.812px;">TEST TEST TEST</div>
<div class="t" style="left:1108.30px;top:544.74px;font-size:14.19px;color:#2e2e38;transform:scaleX(0.9302);transform-origin:0 0;">ZAR</div>
<div class="t" style="left:1108.50px;top:544.74px;width:200px;text-align:right;font-size:14.19px;color:#2e2e38;transform:scaleX(0.9302);transform-origin:100% 0;">1.00</div>
<div class="t" style="left:1202.50px;top:544.74px;width:200px;text-align:right;font-size:14.19px;color:#2e2e38;transform:scaleX(0.9302);transform-origin:100% 0;">15.00</div>
<div class="t" style="left:228.40px;top:570.99px;font-size:14.19px;color:#2e2e38;transform:scaleX(0.9302);transform-origin:0 0;">CN0000144</div>
<div class="t" style="left:369.20px;top:570.99px;font-size:14.19px;color:#2e2e38;transform:scaleX(0.9302);transform-origin:0 0;">YES001</div>
<div class="t" style="left:523.00px;top:570.99px;font-size:14.19px;color:#2e2e38;transform:scaleX(0.9302);transform-origin:0 0;">Young Electric</div>
<div class="t" style="left:813.20px;top:570.99px;font-size:14.19px;color:#2e2e38;transform:scaleX(0.9302);transform-origin:0 0;">New</div>
<div class="t" style="left:944.50px;top:570.99px;font-size:14.19px;color:#2e2e38;transform:scaleX(0.9302);transform-origin:0 0;letter-spacing:0.318px;">testing1234</div>
<div class="t" style="left:1108.30px;top:570.99px;font-size:14.19px;color:#2e2e38;transform:scaleX(0.9302);transform-origin:0 0;">ZAR</div>
<div class="t" style="left:1108.50px;top:570.99px;width:200px;text-align:right;font-size:14.19px;color:#2e2e38;transform:scaleX(0.9302);transform-origin:100% 0;">1.00</div>
<div class="t" style="left:1202.50px;top:570.99px;width:200px;text-align:right;font-size:14.19px;color:#2e2e38;transform:scaleX(0.9302);transform-origin:100% 0;">15.00</div>
<div class="t" style="left:228.40px;top:597.24px;font-size:14.19px;color:#2e2e38;transform:scaleX(0.9302);transform-origin:0 0;">CN0000145</div>
<div class="t" style="left:369.20px;top:597.24px;font-size:14.19px;color:#2e2e38;transform:scaleX(0.9302);transform-origin:0 0;">PAN001</div>
<div class="t" style="left:523.00px;top:597.24px;font-size:14.19px;color:#2e2e38;transform:scaleX(0.9302);transform-origin:0 0;">Panda Copiers</div>
<div class="t" style="left:813.20px;top:597.24px;font-size:14.19px;color:#2e2e38;transform:scaleX(0.9302);transform-origin:0 0;">New</div>
<div class="t" style="left:944.50px;top:597.24px;font-size:14.19px;color:#2e2e38;transform:scaleX(0.9302);transform-origin:0 0;">test</div>
<div class="t" style="left:1108.30px;top:597.24px;font-size:14.19px;color:#2e2e38;transform:scaleX(0.9302);transform-origin:0 0;">USD</div>
<div class="t" style="left:1108.50px;top:597.24px;width:200px;text-align:right;font-size:14.19px;color:#2e2e38;transform:scaleX(0.9302);transform-origin:100% 0;">10.00</div>
<div class="t" style="left:1202.50px;top:597.24px;width:200px;text-align:right;font-size:14.19px;color:#2e2e38;transform:scaleX(0.9302);transform-origin:100% 0;">0.00</div>
<div class="a" style="left:204.00px;top:807.50px;width:1210.00px;height:38.00px;background:linear-gradient(#ececef,#e4e4e8);border-top:1px solid #c8cad0"></div>
<div class="a" style="left:204.00px;top:845.50px;width:1210.00px;height:21.00px;background:#f4f4f7"></div>
<svg class="a" style="left:211.00px;top:852.00px" width="6" height="8.6" viewBox="0 0 6 8.6"><polygon points="6,0 6,8.6 0,4.3" fill="#8a8e96"/></svg>
<svg class="a" style="left:1400.50px;top:852.00px" width="6" height="8.6" viewBox="0 0 6 8.6"><polygon points="0,0 6,4.3 0,8.6" fill="#8a8e96"/></svg>
<div class="a" style="left:224.70px;top:851.50px;width:635.60px;height:9.50px;background:linear-gradient(#ececf0,#d6d6dc);border:1px solid #aeb0b8;border-radius:5px"></div>
<div class="a" style="left:2.00px;top:867.00px;width:1417.00px;height:37.00px;background:linear-gradient(#dcdce1,#d3d3d9);border-top:1px solid #bfc2c9"></div>
<div class="a" style="left:5.00px;top:867.00px;width:1.00px;height:36.00px;background:#c2c4ca"></div>
<div class="a" style="left:2.00px;top:902.50px;width:1417.00px;height:1.50px;background:#b8bac0"></div>
<div class="t" style="left:16.00px;top:877.94px;font-size:14.19px;color:#2e2e3a;transform:scaleX(0.9302);transform-origin:0 0;letter-spacing:0.009px;">Open Windows</div>
<svg class="a" style="left:110.60px;top:883.30px" width="7.6" height="4.7" viewBox="0 0 7.6 4.7"><polygon points="0,0 7.6,0 3.8,4.7" fill="#2a2a36"/></svg>
<div class="a" style="left:921.20px;top:874.00px;width:1.00px;height:25.00px;background:#b6b9c0"></div>
<div class="a" style="left:1037.70px;top:874.00px;width:1.00px;height:25.00px;background:#b6b9c0"></div>
<div class="a" style="left:1129.60px;top:874.00px;width:1.00px;height:25.00px;background:#b6b9c0"></div>
<div class="a" style="left:1259.50px;top:874.00px;width:1.00px;height:25.00px;background:#b6b9c0"></div>
<div class="t" style="left:933.00px;top:879.74px;font-size:14.19px;color:#2e2e3a;transform:scaleX(0.9302);transform-origin:0 0;letter-spacing:0.064px;">User : JulandaK</div>
<div class="t" style="left:1049.50px;top:879.74px;font-size:14.19px;color:#2e2e3a;transform:scaleX(0.9302);transform-origin:0 0;letter-spacing:0.327px;">14/04/2021</div>
<div class="t" style="left:1139.00px;top:879.74px;font-size:14.19px;color:#2e2e3a;transform:scaleX(0.9302);transform-origin:0 0;letter-spacing:0.487px;">Version : 2.4.0.11</div>
<div class="t" style="left:1268.60px;top:879.74px;font-size:14.19px;color:#2e2e3a;transform:scaleX(0.9302);transform-origin:0 0;letter-spacing:-0.123px;">Example Company</div>
<svg class="a" style="left:1399.00px;top:884.00px" width="14" height="14" viewBox="0 0 14 14"><path d="M1,13 L13,1 M5.5,13 L13,5.5 M10,13 L13,10" stroke="#9a9ea6" stroke-width="1.1"/></svg>
<svg class="a" style="left:0.00px;top:0.00px" width="1421" height="907" viewBox="0 0 1421 907"><rect x="983.25" y="73.25" width="126.2" height="28" fill="none" stroke="#3d63cc" stroke-width="3.5"/><rect x="983.25" y="111.05" width="126.2" height="27.9" fill="none" stroke="#3d63cc" stroke-width="3.5"/><rect x="809.2" y="222.4" width="132.3" height="393.2" fill="none" stroke="#3d63cc" stroke-width="3.5"/><path d="M298,24 L473,18.3" stroke="#3d63cc" stroke-width="2.6"/><polygon points="488.8,17.7 470.3,12.4 470.8,24.8" fill="#3d63cc"/><path d="M1250,89.2 L1124,90.2" stroke="#3d63cc" stroke-width="3"/><polygon points="1111.2,90.4 1127.2,83.4 1127.4,97.6" fill="#3d63cc"/><path d="M1246,153.5 L1126,134.6" stroke="#3d63cc" stroke-width="3"/><polygon points="1112.9,132.6 1130,126.3 1127.6,140.4" fill="#3d63cc"/><path d="M874,160 L874,206" stroke="#3d63cc" stroke-width="3"/><polygon points="874,220.7 866.8,203 881.6,203" fill="#3d63cc"/><path d="M889.3,147.9 Q928,141 965,130.8" fill="none" stroke="#34509e" stroke-width="1.4" stroke-dasharray="0,4,5,9"/><polygon points="980.6,127.4 965.1,124.3 972.3,128.7 967.5,136.7" fill="#1a2262"/><circle cx="286.3" cy="24.6" r="14.2" fill="#3b66dc"/><text x="286.3" y="30.8" font-size="17.5" text-anchor="middle" fill="#fff" font-family="Liberation Sans">1</text><circle cx="1262.7" cy="88.9" r="14.8" fill="#3b66dc"/><text x="1262.7" y="95.1" font-size="17.5" text-anchor="middle" fill="#fff" font-family="Liberation Sans">2</text><circle cx="1258.7" cy="156.2" r="14.8" fill="#3b66dc"/><text x="1258.7" y="162.4" font-size="17.5" text-anchor="middle" fill="#fff" font-family="Liberation Sans">3</text><circle cx="874" cy="149.2" r="14.8" fill="#3b66dc"/><text x="874" y="155.4" font-size="17.5" text-anchor="middle" fill="#fff" font-family="Liberation Sans">4</text></svg>
</body></html>
